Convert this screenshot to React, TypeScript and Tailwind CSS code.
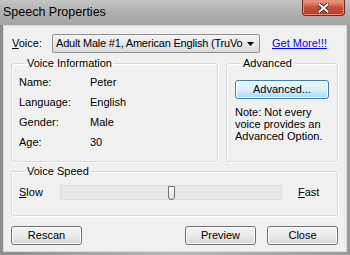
const font = { fontFamily: '"Liberation Sans", Arial, sans-serif' };

const Btn = ({ label, w, primary }: { label: string; w: string; primary?: boolean }) => (
  <button
    className={`${w} h-[19px] rounded-[3px] border text-[11px] leading-none text-black ${
      primary
        ? 'border-[#3c7fb1] bg-gradient-to-b from-[#eaf6fd] via-[#d9f0fc] to-[#a7d9f5] shadow-[inset_0_0_0_1px_#ffffff]'
        : 'border-[#707070] bg-gradient-to-b from-[#f2f2f2] via-[#ebebeb] to-[#d6d6d6] shadow-[inset_0_0_0_1px_#fcfcfc]'
    }`}
  >
    {label}
  </button>
);

const Group = ({ title, className, children }: { title: string; className: string; children: React.ReactNode }) => (
  <fieldset className={`border border-[#d5dada] rounded-[3px] shadow-[inset_1px_1px_0_#ffffff,1px_1px_0_#ffffff] ${className}`}>
    <legend className="ml-[6px] px-[2px] text-[11px] leading-[12px] text-black">{title}</legend>
    {children}
  </fieldset>
);

const InfoRow = ({ label, value }: { label: string; value: string }) => (
  <div className="flex h-[20px] items-center text-[11px] text-black">
    <span className="w-[71px]">{label}</span>
    <span>{value}</span>
  </div>
);

export default function App() {
  return (
    <div
      style={font}
      className="flex h-[255px] w-[350px] flex-col overflow-hidden bg-gradient-to-r from-[#8e8e8e] via-[#b9b9b9] to-[#9a9a9a]"
    >
      {/* title bar */}
      <div className="flex h-[25px] shrink-0 items-start justify-between bg-gradient-to-b from-[#c4c4c4] via-[#b0b0b0] to-[#a5a5a5]">
        <span className="ml-[3px] mt-[4px] text-[12.5px] leading-[16px] text-black">Speech Properties</span>
        <div className="mr-[5px] flex h-[16px] w-[43px] items-center justify-center rounded-b-[4px] border border-t-0 border-[#6b2b22] bg-gradient-to-b from-[#e8a493] via-[#c94f3a] to-[#b63a26] shadow-[inset_0_0_0_1px_#e98d7b]">
          <svg width="11" height="10" viewBox="0 0 11 10">
            <path d="M1.5 1.5 L9.5 8.5 M9.5 1.5 L1.5 8.5" stroke="#3a1a14" strokeWidth="3.6" strokeLinecap="square" />
            <path d="M1.5 1.5 L9.5 8.5 M9.5 1.5 L1.5 8.5" stroke="#ffffff" strokeWidth="2" strokeLinecap="square" />
          </svg>
        </div>
      </div>

      {/* client area */}
      <div className="mx-[3px] flex h-[227px] flex-col border border-[#d9d9d9] bg-[#f0f0f0] px-[7px] pt-[8px]">
        {/* voice row */}
        <div className="flex h-[19px] items-center text-[11px] text-black">
          <span className="w-[41px] pl-[1px]">
            <span className="underline">V</span>oice:
          </span>
          <div className="flex h-[19px] w-[208px] items-center justify-between rounded-[2px] border border-[#8e8f8f] bg-gradient-to-b from-[#f4f4f4] to-[#dcdcdc] pl-[3px] pr-[5px]">
            <span className="whitespace-nowrap tracking-[-0.2px]">Adult Male #1, American English (TruVo</span>
            <svg width="7" height="4" viewBox="0 0 7 4" className="ml-[2px] shrink-0">
              <path d="M0 0 H7 L3.5 4 Z" fill="#000" />
            </svg>
          </div>
          <a className="ml-[12px] text-[#0000ff] underline">Get More!!!</a>
        </div>

        {/* groups */}
        <div className="mt-[4px] flex gap-[8px]">
          <Group title="Voice Information" className="h-[105px] w-[207px] px-[7px] pt-[3px]">
            <InfoRow label="Name:" value="Peter" />
            <InfoRow label="Language:" value="English" />
            <InfoRow label="Gender:" value="Male" />
            <InfoRow label="Age:" value="30" />
          </Group>
          <Group title="Advanced" className="h-[105px] w-[112px] px-[8px] pt-[7px]">
            <Btn label="Advanced..." w="w-[94px]" primary />
            <p className="mt-[6px] text-[11px] leading-[12px] text-black">
              Note: Not every voice provides an Advanced Option.
            </p>
          </Group>
        </div>

        {/* voice speed */}
        <Group title="Voice Speed" className="mt-[3px] h-[51px] w-[327px] pl-[7px] pr-[5px]">
          <div className="mt-[7px] flex items-center text-[11px] text-black">
            <span className="w-[41px]">
              <span className="underline">S</span>low
            </span>
            <div className="relative h-[15px] w-[222px] border border-[#dedede] bg-[#e5e9e9]">
              <div className="absolute left-[107px] top-0 h-[14px] w-[7px] rounded-b-[3px] border border-[#707070] bg-gradient-to-b from-[#fafafa] to-[#e0e0e0]" />
            </div>
            <span className="ml-[16px]">
              <span className="underline">F</span>ast
            </span>
          </div>
        </Group>

        {/* buttons */}
        <div className="mt-[10px] flex">
          <Btn label="Rescan" w="w-[71px]" />
          <div className="flex-1" />
          <Btn label="Preview" w="w-[71px]" />
          <div className="w-[11px]" />
          <Btn label="Close" w="w-[71px]" />
          <div className="w-[1px]" />
        </div>
      </div>
    </div>
  );
}
